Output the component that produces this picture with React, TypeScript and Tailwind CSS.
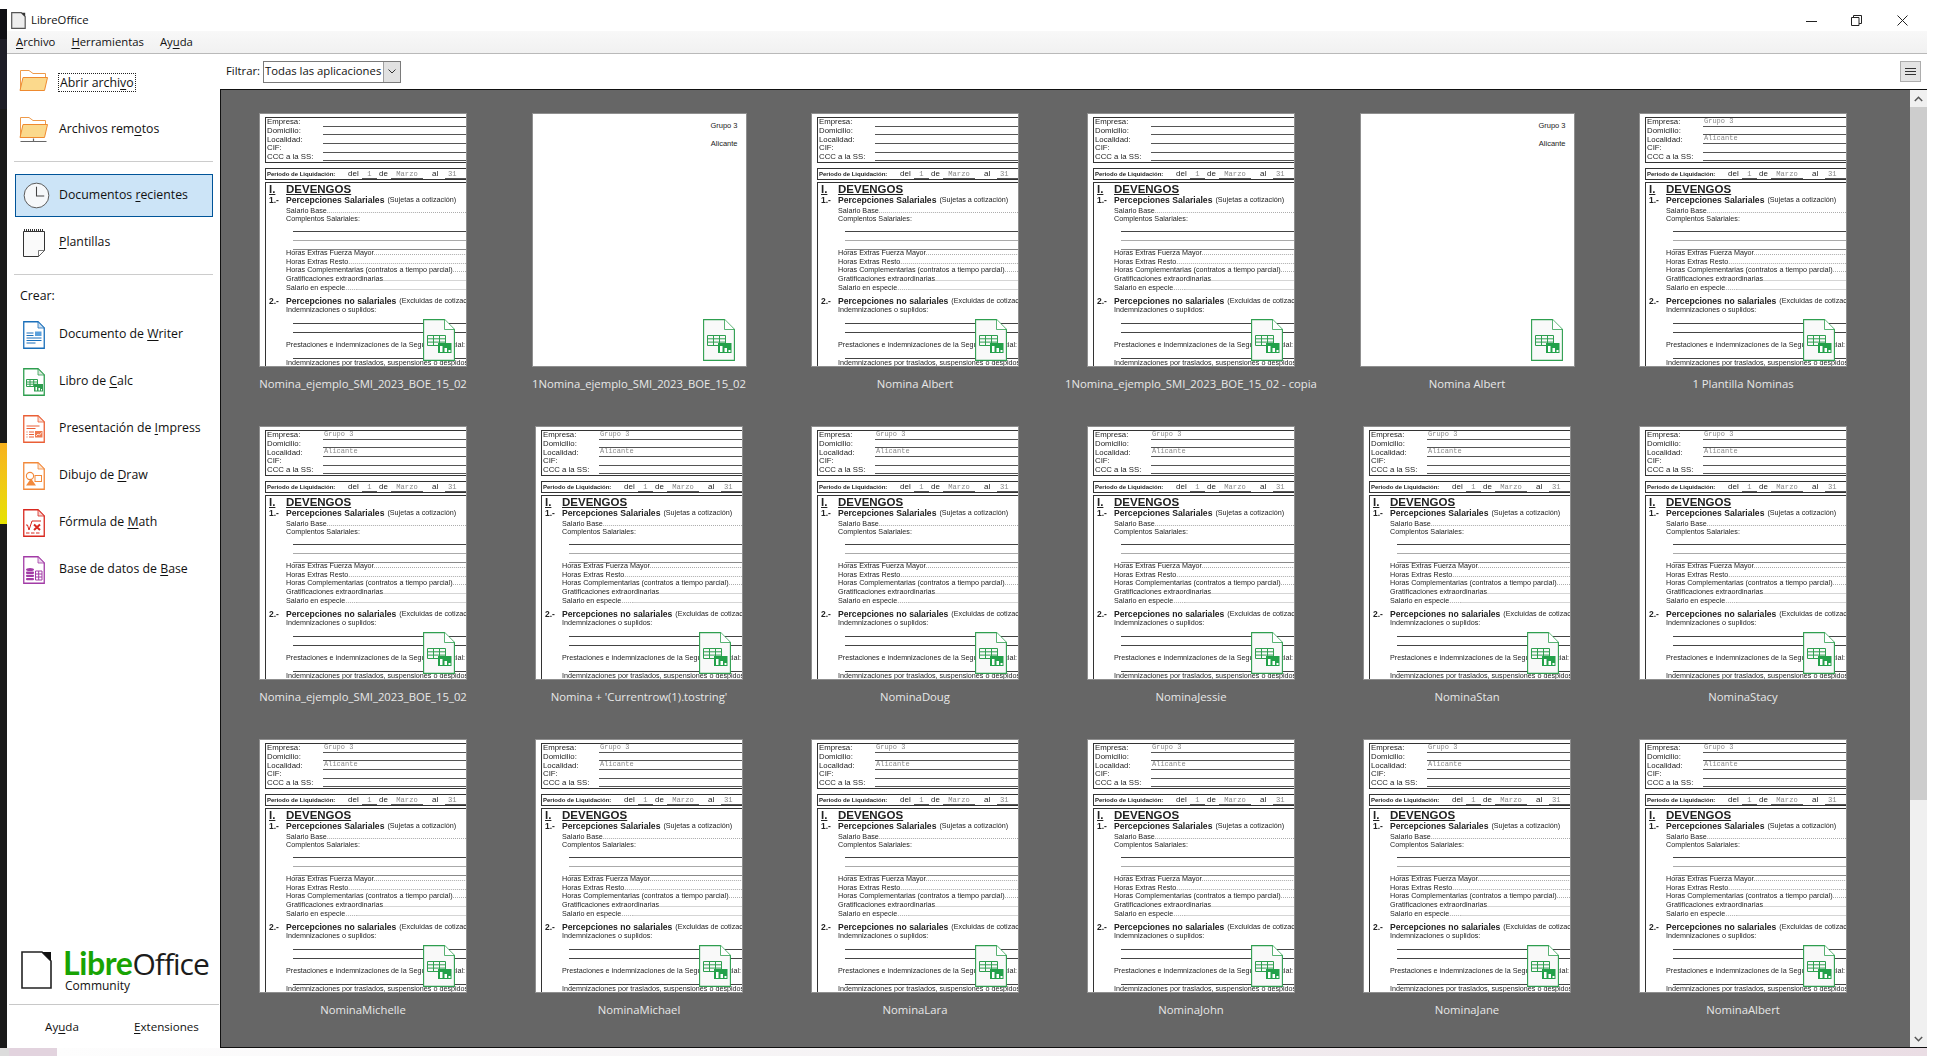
import React from "react";

const ui = "font-['Open_Sans','Noto_Sans',sans-serif]";
const arial = "font-['Liberation_Sans',Arial,sans-serif]";
const mono = "font-['Liberation_Mono',monospace]";

function U({ children }: { children: React.ReactNode }) {
  return <span className="underline underline-offset-2 decoration-1">{children}</span>;
}

function DocBase({ color, fold = "#d9e8dc", children }: { color: string; fold?: string; children?: React.ReactNode }) {
  return (
    <svg width="22" height="28" viewBox="0 0 22 28" className="shrink-0">
      <path d="M.75.75H15L21.25 7v20.25H.75z" fill="#fff" stroke={color} strokeWidth="1.3" />
      <path d="M15 .75V7h6.25z" fill={fold} stroke={color} strokeWidth="0.8" />
      {children}
    </svg>
  );
}

const WriterIcon = () => (
  <DocBase color="#1a6fba" fold="#cfe1f2">
    <g stroke="#1a6fba" strokeWidth="1" fill="none">
      <path d="M3.5 12h7M3.5 14.5h7M3.5 17h15M3.5 19.5h15M3.5 22h9" />
    </g>
    <rect x="12" y="10.5" width="6.5" height="4.5" fill="#5aa0dc" />
  </DocBase>
);
const CalcIcon = () => (
  <DocBase color="#2e9e4f">
    <g stroke="#2e9e4f" strokeWidth="1" fill="none">
      <path d="M3.5 11.5h11v7h-11zM3.5 14h11M3.5 16.2h11M7 11.5v7M10.7 11.5v7" />
    </g>
    <path d="M11 16h9v7.5h-9z" fill="#2e9e4f" />
    <path d="M12.5 19h1.5v3.5h-1.5zM15.5 20h1.5v2.5h-1.5zM18 21h1v1.5h-1z" fill="#fff" />
  </DocBase>
);
const ImpressIcon = () => (
  <DocBase color="#ea5f36" fold="#fbdcd2">
    <g stroke="#ea5f36" strokeWidth="1" fill="none">
      <path d="M3.5 11h13M3.5 13.5h9M3.5 17h1M6 17h5M3.5 19.5h1M6 19.5h5M3.5 22h1M6 22h5" />
    </g>
    <rect x="12" y="16" width="7.5" height="6.5" fill="#ef7a50" />
    <path d="M13 21l2-2 1.5 1 2-2.5" stroke="#fff" fill="none" strokeWidth=".8" />
  </DocBase>
);
const DrawIcon = () => (
  <DocBase color="#f2893b" fold="#fde4cf">
    <circle cx="7" cy="14" r="3.6" fill="#fff" stroke="#f2893b" strokeWidth="1.1" />
    <rect x="12" y="13.5" width="6.5" height="6" fill="#fff" stroke="#f2893b" strokeWidth="1" />
    <path d="M3 23.5l5-7 5 7z" fill="#f2893b" />
  </DocBase>
);
const MathIcon = () => (
  <DocBase color="#d8281f" fold="#f7d2cf">
    <path d="M3 16h1.5l1.5 5 3-9h9" stroke="#d8281f" fill="none" strokeWidth="1" />
    <path d="M11 15.5l6 5.5M17 15.5l-6 5.5" stroke="#d8281f" strokeWidth="2" />
    <path d="M3 24h3.5M8 24h3.5M13 24h3.5" stroke="#d8281f" strokeWidth="1" />
  </DocBase>
);
const BaseIcon = () => (
  <DocBase color="#a23ba6" fold="#ecd4ed">
    <g fill="#a23ba6">
      <ellipse cx="7" cy="13.5" rx="4" ry="1.6" />
      <rect x="3" y="15.5" width="8" height="2.4" rx="1" />
      <rect x="3" y="18.7" width="8" height="2.4" rx="1" />
      <rect x="3" y="21.9" width="8" height="2.4" rx="1" />
    </g>
    <path d="M12.5 15h6.5v9h-6.5zM12.5 18h6.5M12.5 21h6.5M15.7 15v9" stroke="#a23ba6" fill="none" strokeWidth="1" />
  </DocBase>
);

function FolderIcon({ remote }: { remote?: boolean }) {
  return (
    <svg width="29" height="28" viewBox="0 0 29 28" className="shrink-0">
      <path d="M1.5 21V1.5h8.5l4 3h12.5V8" fill="#fff" stroke="#ee9a4a" strokeWidth="1" />
      <path d="M1 21.5l3-13h24.5l-3 13z" fill="#fbd98c" stroke="#ee8a2f" strokeWidth="1" />
      {remote && <path d="M1.5 25.5h26M14.5 22.5v3" stroke="#666" strokeWidth="1.2" fill="none" />}
    </svg>
  );
}

const ClockIcon = () => (
  <svg width="27" height="27" viewBox="0 0 28 28" className="shrink-0">
    <circle cx="14" cy="14" r="12.8" fill="#f6f8fa" stroke="#555" strokeWidth="1" />
    <path d="M14 5v9.5h8" stroke="#444" fill="none" strokeWidth="1.1" />
  </svg>
);

const TemplateIcon = () => (
  <svg width="22" height="30" viewBox="0 0 22 30" className="shrink-0">
    <path d="M.5 3.5h21v19l-6 6H.5z" fill="#fafafa" stroke="#333" strokeWidth="1" />
    <path d="M15.5 28.5v-6h6z" fill="#fff" stroke="#555" strokeWidth=".8" />
    <path d="M1.5 1v3M3.5 1v3M5.5 1v3M7.5 1v3M9.5 1v3M11.5 1v3M13.5 1v3M15.5 1v3M17.5 1v3M19.5 1v3" stroke="#333" strokeWidth="1" />
  </svg>
);

const BadgeIcon = () => (
  <div className="absolute right-[11px] bottom-[5px]">
    <svg width="32" height="42" viewBox="0 0 32 42" className="block">
      <path d="M.6.6H21.5L31.4 10.5V41.4H.6z" fill="#f9f9f9" stroke="#2e9e4f" strokeWidth="1.1" />
      <path d="M21.5.6v9.9h9.9" fill="#fff" stroke="#2e9e4f" strokeWidth=".8" />
      <path d="M4.5 16.5h18v10h-18zM4.5 19.8h18M4.5 23.1h18M10.5 16.5v10M16.5 16.5v10" stroke="#2e9e4f" strokeWidth="1" fill="none" />
      <path d="M15 24h13.5v10H15z" fill="#23a14a" />
      <path d="M17 27h2.5v6H17zM21.5 29h2.5v4h-2.5zM25.5 31H27.5v2h-2z" fill="#fff" />
    </svg>
  </div>
);

const LogoIcon = () => (
  <svg width="31" height="38" viewBox="0 0 31 38" className="shrink-0 mt-[1px]">
    <path d="M1 1h20l9 9v27H1z" fill="#fff" stroke="#222" strokeWidth="1.6" />
    <path d="M21 1h9v9z" fill="#111" />
  </svg>
);

function Field({ label, value }: { label: string; value?: string }) {
  return (
    <div className="flex h-[8.7px] items-center">
      <div className="w-[57px] shrink-0 leading-[8px] pl-[1px] text-[7.8px]">{label}</div>
      <div className={`flex-1 h-full border-b border-[#555] text-[7px] leading-[7px] text-[#8a8a8a] pl-[1px] ${mono}`}>{value}</div>
    </div>
  );
}

function Dotted({ text }: { text: string }) {
  return (
    <div className="h-[8.7px] leading-[8.7px] ml-[21px] whitespace-nowrap overflow-hidden">
      {text}
      <span className="text-[#666]">{"........................................................................................................"}</span>
    </div>
  );
}

function Rule({ h, color = "#444" }: { h: string; color?: string }) {
  return <div className={`${h} ml-[28px] border-b`} style={{ borderColor: color }} />;
}

function Doc({ filled }: { filled?: boolean }) {
  return (
    <div className={`relative w-[208px] h-[254px] bg-white border border-[#8f8f8f] overflow-hidden ${arial}`}>
      <div className="w-[240px] pl-[5px] pt-[3px] text-[7.2px] text-[#222] blur-[0.25px]">
        <div className="h-[46px] border border-[#333]">
          <Field label="Empresa:" value={filled ? "Grupo 3" : ""} />
          <Field label="Domicilio:" />
          <Field label="Localidad:" value={filled ? "Alicante" : ""} />
          <Field label="CIF:" />
          <Field label="CCC a la SS:" />
        </div>
        <div className="mt-[5px] h-[12px] border border-[#333] flex items-center whitespace-nowrap">
          <div className="w-[82px] pl-[1px] font-bold text-[6px]">Periodo de Liquidación:</div>
          <div className="w-[14px] text-[8px]">del</div>
          <div className={`w-[15px] h-full border-b border-[#555] text-center text-[#888] ${mono}`}>1</div>
          <div className="w-[14px] pl-[2px] text-[8px]">de</div>
          <div className={`w-[32px] h-full border-b border-[#555] text-center text-[#888] ${mono}`}>Marzo</div>
          <div className="w-[22px] pl-[9px] text-[8px]">al</div>
          <div className={`w-[22px] h-full border-b border-[#555] text-[#888] pl-[3px] ${mono}`}>31</div>
        </div>
        <div className="mt-[2px] border-l border-t border-[#333] pl-[3px] h-[190px]">
          <div className="flex h-[12px] items-center font-bold text-[11.5px] leading-[12px]">
            <div className="w-[17px] underline">I.</div>
            <div className="underline">DEVENGOS</div>
          </div>
          <div className="flex h-[11px] items-center whitespace-nowrap">
            <div className="w-[17px] font-bold text-[8.5px]">1.-</div>
            <div className="font-bold text-[8.6px]">Percepciones Salariales</div>
            <div className="ml-[3px] text-[7.2px]">(Sujetas a cotización)</div>
          </div>
          <div className="ml-[17px] h-[9px] leading-[9px] whitespace-nowrap overflow-hidden">
            Salario Base<span className="text-[#666]">{"......................................................................................"}</span>
          </div>
          <div className="ml-[17px] h-[8px] leading-[8px]">Complentos Salariales:</div>
          <div className="-ml-[4px]">
            <Rule h="h-[9px]" />
            <Rule h="h-[9px]" color="#aaa" />
            <Rule h="h-[9px]" color="#888" />
          </div>
          <div className="-mt-[1px] -ml-[4px]">
            <Dotted text="Horas Extras Fuerza Mayor" />
            <Dotted text="Horas Extras Resto" />
            <Dotted text="Horas Complementarias (contratos a tiempo parcial)" />
            <Dotted text="Gratificaciones extraordinarias" />
            <Dotted text="Salario en especie" />
          </div>
          <div className="mt-[4px] flex h-[10px] items-center whitespace-nowrap">
            <div className="w-[17px] font-bold text-[8.5px]">2.-</div>
            <div className="font-bold text-[8.6px]">Percepciones no salariales</div>
            <div className="ml-[3px] text-[7.2px]">(Excluidas de cotización)</div>
          </div>
          <div className="ml-[17px] h-[8px] leading-[8px]">Indemnizaciones o suplidos:</div>
          <div className="-ml-[4px]">
            <Rule h="h-[10px]" />
            <Rule h="h-[9px]" />
          </div>
          <div className="ml-[17px] mt-[7px] h-[10px] leading-[10px] whitespace-nowrap">
            Prestaciones e indemnizaciones de la Seguridad Social:
          </div>
          <div className="-ml-[4px]">
            <Rule h="h-[9px]" />
          </div>
          <div className="ml-[17px] h-[8px] leading-[8px] whitespace-nowrap">
            Indemnizaciones por traslados, suspensiones o despidos:
          </div>
        </div>
      </div>
      <BadgeIcon />
    </div>
  );
}

function BlankDoc() {
  return (
    <div className={`relative w-[215px] h-[254px] bg-white border border-[#8f8f8f] ${arial}`}>
      <div className="flex flex-col items-end pr-[8px] pt-[8px] text-[7.5px] leading-[8px] text-[#222] gap-[10px]">
        <div>Grupo 3</div>
        <div>Alicante</div>
      </div>
      <BadgeIcon />
    </div>
  );
}

type Cell = { name: string; kind: "empty" | "filled" | "blank" };

const cells: Cell[] = [
  { name: "Nomina_ejemplo_SMI_2023_BOE_15_02", kind: "empty" },
  { name: "1Nomina_ejemplo_SMI_2023_BOE_15_02", kind: "blank" },
  { name: "Nomina Albert", kind: "empty" },
  { name: "1Nomina_ejemplo_SMI_2023_BOE_15_02 - copia", kind: "empty" },
  { name: "Nomina Albert", kind: "blank" },
  { name: "1 Plantilla Nominas", kind: "filled" },
  { name: "Nomina_ejemplo_SMI_2023_BOE_15_02", kind: "filled" },
  { name: "Nomina + 'Currentrow(1).tostring'", kind: "filled" },
  { name: "NominaDoug", kind: "filled" },
  { name: "NominaJessie", kind: "filled" },
  { name: "NominaStan", kind: "filled" },
  { name: "NominaStacy", kind: "filled" },
  { name: "NominaMichelle", kind: "filled" },
  { name: "NominaMichael", kind: "filled" },
  { name: "NominaLara", kind: "filled" },
  { name: "NominaJohn", kind: "filled" },
  { name: "NominaJane", kind: "filled" },
  { name: "NominaAlbert", kind: "filled" },
];

function Thumb({ cell }: { cell: Cell }) {
  return (
    <div className="h-[313px] flex flex-col items-center pt-[23px]">
      {cell.kind === "blank" ? <BlankDoc /> : <Doc filled={cell.kind === "filled"} />}
      <div className="mt-[9px] h-[16px] leading-[16px] text-[11.3px] text-[#e8e8e8] whitespace-nowrap">{cell.name}</div>
    </div>
  );
}

function SideRow({ icon, children, className = "" }: { icon: React.ReactNode; children: React.ReactNode; className?: string }) {
  return (
    <div className={`flex items-center h-[47px] ${className}`}>
      <div className="w-[52px] shrink-0 flex justify-center pl-[1px]">{icon}</div>
      <div className="whitespace-nowrap text-[12.3px]">{children}</div>
    </div>
  );
}

export default function App() {
  return (
    <div className={`w-[1936px] h-[1056px] bg-white overflow-hidden flex flex-col text-[#111] ${ui}`}>
      <div className="h-[9px] shrink-0" />
      <div className="flex h-[1039px] shrink-0">
        <div className="w-[7px] shrink-0 flex flex-col">
          <div className="h-[30px] bg-[#0f0f14]" />
          <div className="h-[70px] bg-[#1d1d26]" />
          <div className="h-[334px] bg-[#1a1a1a]" />
          <div className="h-[81px] bg-gradient-to-b from-[#f7b11e] to-[#e6e200]" />
          <div className="flex-1 bg-[#1a1a1a]" />
        </div>
        <div className="w-[1920px] shrink-0 flex flex-col">
          {/* Title bar */}
          <div className="h-[22px] shrink-0 flex items-center pl-[4px]">
            <svg width="15" height="17" viewBox="0 0 15 17" className="shrink-0">
              <path d="M.7.7h9.5l4 4v11.6H.7z" fill="#eee" stroke="#555" strokeWidth="1.2" />
              <path d="M10.2.7h4v4z" fill="#333" />
            </svg>
            <div className="ml-[5px] text-[11.3px]">LibreOffice</div>
            <div className="ml-auto flex items-center pr-[19px]">
              <svg width="11" height="11" viewBox="0 0 11 11" className="mr-[34px]"><path d="M0 6.5h11" stroke="#222" /></svg>
              <svg width="11" height="11" viewBox="0 0 11 11" className="mr-[35px]"><path d="M.5 2.5h7.5v8H.5zM2.5 2.5V.5h8v8H8" fill="none" stroke="#222" /></svg>
              <svg width="11" height="11" viewBox="0 0 11 11"><path d="M.5.5l10 10M10.5.5l-10 10" fill="none" stroke="#222" /></svg>
            </div>
          </div>
          {/* Menu */}
          <div className="h-[23px] shrink-0 flex items-center pl-[9px] pt-[1px] gap-[16px] text-[11.3px] bg-gradient-to-b from-[#f8f8f8] to-[#f1f1f1] border-b border-[#b9b9b9]">
            <div><U>A</U>rchivo</div>
            <div><U>H</U>erramientas</div>
            <div>Ay<U>u</U>da</div>
          </div>
          <div className="flex-1 min-h-0 flex">
            {/* Sidebar */}
            <div className="w-[213px] shrink-0 flex flex-col">
              <div className="flex items-center h-[47px] mt-[5px]">
                <div className="w-[52px] shrink-0 flex justify-center"><FolderIcon /></div>
                <div className="text-[12.3px] px-[1px] border border-dotted border-[#222] whitespace-nowrap leading-[17px] -ml-[1px]">Abrir archi<U>v</U>o</div>
              </div>
              <SideRow icon={<FolderIcon remote />} className="[&>div:first-child]:pl-0">Archivos rem<U>o</U>tos</SideRow>
              <div className="h-px bg-[#ccc] ml-[7px] mr-[7px] mt-[8px]" />
              <div className="ml-[8px] mr-[7px] mt-[12px] h-[43px] bg-[#cce4f7] border border-[#005499] flex items-center">
                <div className="w-[40px] shrink-0 flex justify-center pl-[1px]"><ClockIcon /></div>
                <div className="ml-[3px] text-[12.3px] whitespace-nowrap">Documentos <U>r</U>ecientes</div>
              </div>
              <SideRow icon={<TemplateIcon />} className="mt-[2px]"><U>P</U>lantillas</SideRow>
              <div className="h-px bg-[#ccc] ml-[7px] mr-[7px] mt-[8px]" />
              <div className="h-[20px] leading-[20px] mt-[11px] pl-[13px] text-[12.3px]">Crear:</div>
              <div className="mt-[5px]">
                <SideRow icon={<WriterIcon />}>Documento de <U>W</U>riter</SideRow>
                <SideRow icon={<CalcIcon />}>Libro de <U>C</U>alc</SideRow>
                <SideRow icon={<ImpressIcon />}>Presentación de <U>I</U>mpress</SideRow>
                <SideRow icon={<DrawIcon />}>Dibujo de <U>D</U>raw</SideRow>
                <SideRow icon={<MathIcon />}>Fórmula de <U>M</U>ath</SideRow>
                <SideRow icon={<BaseIcon />}>Base de datos de <U>B</U>ase</SideRow>
              </div>
              <div className="mt-auto flex pl-[14px] items-start">
                <LogoIcon />
                <div className="ml-[11px] -mt-[2px] font-['Lato',sans-serif]">
                  <div className="text-[32px] leading-[30px] whitespace-nowrap tracking-[-0.4px]">
                    <span className="font-bold text-[#18a303]">Libre</span>
                    <span className="text-[#1c1c1c] font-['Open_Sans',sans-serif] text-[30px] tracking-[-1px]">Office</span>
                  </div>
                  <div className={`text-[12px] leading-[14px] pl-[2px] ${ui}`}>Community</div>
                </div>
              </div>
              <div className="h-px bg-[#c8c8c8] ml-[2px] mr-[1px] mt-[11px]" />
              <div className="h-[43px] flex items-center text-[11.6px]">
                <div className="w-[110px] text-center">Ay<U>u</U>da</div>
                <div className="pl-[17px]"><U>E</U>xtensiones</div>
              </div>
            </div>
            {/* Right */}
            <div className="flex-1 min-w-0 flex flex-col">
              <div className="h-[35px] shrink-0 flex items-center pl-[6px] pr-[6px] text-[11.3px]">
                <div className="w-[37px]">Filtrar:</div>
                <div className="w-[138px] h-[22px] border border-[#7a7a7a] flex items-center bg-white">
                  <div className="flex-1 pl-[1px] whitespace-nowrap">Todas las aplicaciones</div>
                  <div className="w-[17px] h-full bg-[#e1e1e1] border-l border-[#a0a0a0] flex items-center justify-center">
                    <svg width="8" height="5" viewBox="0 0 8 5"><path d="M.5.5L4 4 7.5.5" fill="none" stroke="#333" /></svg>
                  </div>
                </div>
                <div className="ml-auto w-[21px] h-[21px] bg-[#e4e4e4] border border-[#adadad] flex items-center justify-center">
                  <svg width="11" height="9" viewBox="0 0 11 9"><path d="M0 1.5h11M0 4.5h11M0 7.5h11" stroke="#333" /></svg>
                </div>
              </div>
              <div className="flex-1 min-h-0 flex border-l border-t border-b border-[#111]">
                <div className="flex-1 min-w-0 bg-[#666666] pl-[4px] overflow-hidden">
                  <div className="grid grid-cols-[repeat(6,276px)]">
                    {cells.map((c, i) => (
                      <Thumb key={i} cell={c} />
                    ))}
                  </div>
                </div>
                <div className="w-[17px] shrink-0 bg-[#f0f0f0] flex flex-col">
                  <div className="h-[17px] flex items-center justify-center">
                    <svg width="9" height="6" viewBox="0 0 9 6"><path d="M.8 5L4.5 1.3 8.2 5" fill="none" stroke="#555" strokeWidth="1.5" /></svg>
                  </div>
                  <div className="h-[693px] bg-[#cdcdcd]" />
                  <div className="mt-auto h-[17px] flex items-center justify-center">
                    <svg width="9" height="6" viewBox="0 0 9 6"><path d="M.8 1L4.5 4.7 8.2 1" fill="none" stroke="#555" strokeWidth="1.5" /></svg>
                  </div>
                </div>
              </div>
            </div>
          </div>
        </div>
      </div>
      {/* wallpaper strip */}
      <div className="h-[8px] w-[1927px] shrink-0 flex overflow-hidden">
        <div className="w-[9px] bg-[#dcdcdc]" />
        <div className="w-[48px] bg-[#e2d3de]" />
        <div className="flex-1 bg-gradient-to-r from-[#fdfdfd] via-[#f4f1f3] to-[#eadde4] flex justify-end">
          <div className="mt-[5px] mr-[70px] text-[12px] leading-[16px] text-[#111]">10:24</div>
        </div>
      </div>
    </div>
  );
}
